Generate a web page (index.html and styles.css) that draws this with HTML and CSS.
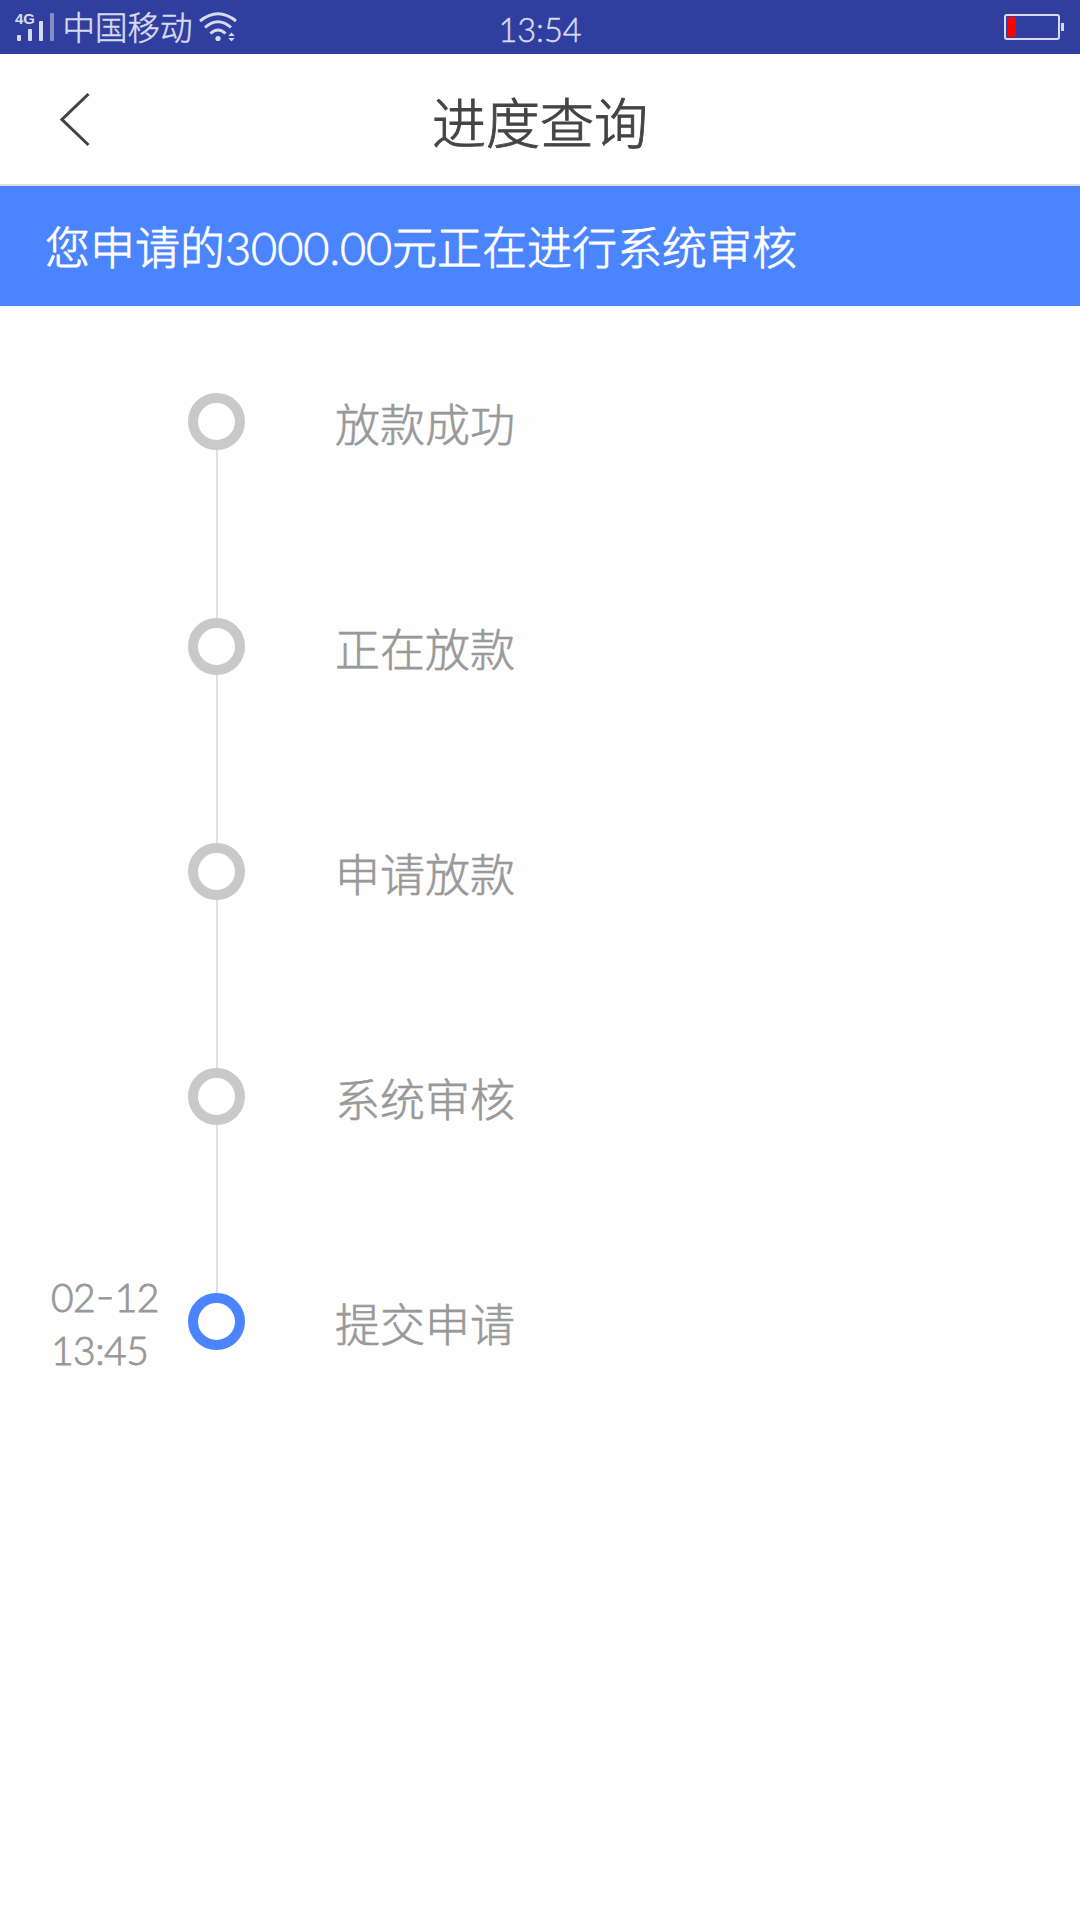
FILE: index.html
```
<!DOCTYPE html>
<html lang="zh-CN">
<head>
    <meta charset="UTF-8">
    <meta name="viewport" content="width=device-width, initial-scale=1.0">
    <title>进度查询</title>
    <link rel="stylesheet" href="styles.css">
</head>
<body>
    <div class="status-bar">
        <div class="status-left">
            <div class="signal">
                <span class="network">4G</span>
                <svg width="38" height="29" viewBox="0 0 38 29" fill="#d8dbf0">
                    <rect x="1" y="22" width="4" height="6" rx="1"/>
                    <rect x="12" y="16" width="4" height="12" rx="1"/>
                    <rect x="23" y="8" width="4" height="20" rx="1"/>
                    <rect x="34" y="0" width="4" height="28" rx="1" opacity="0.5"/>
                </svg>
            </div>
            <span class="carrier">中国移动</span>
            <svg class="wifi" width="38" height="30" viewBox="0 0 38 30" fill="none" stroke="#d8dbf0" stroke-width="3">
                <path d="M1 9 Q19 -5.500 37 9"/>
                <path d="M6 15.500 Q19 4 32 15.500"/>
                <path d="M11.500 21.500 Q19 14.500 26.500 21.500"/>
                <circle cx="19" cy="26.500" r="2.600" fill="#d8dbf0" stroke="none"/>
                <path d="M29.300 24 L32.500 20.500 L35.700 24 Z M29.300 26 L32.500 29.500 L35.700 26 Z" fill="#d8dbf0" stroke="none"/>
            </svg>
        </div>
        <div class="clock">13:54</div>
        <div class="status-right">
            <svg width="61" height="26" viewBox="0 0 61 26">
                <rect x="1" y="1" width="54" height="24" rx="2" fill="none" stroke="#d8dbf0" stroke-width="2"/>
                <rect x="3" y="3" width="9" height="20" fill="#ff0000"/>
                <rect x="57" y="9" width="3" height="8" fill="#d8dbf0"/>
            </svg>
        </div>
    </div>

    <div class="header">
        <svg class="back" width="30" height="54" viewBox="0 0 30 54" fill="none" stroke="#444" stroke-width="3">
            <path d="M28.500 1 L2 26.500 L28.500 52"/>
        </svg>
        <h1>进度查询</h1>
    </div>

    <div class="banner">您申请的3000.00元正在进行系统审核</div>

    <div class="steps">
        <div class="step">
            <div class="time"></div>
            <div class="dot"></div>
            <div class="label">放款成功</div>
        </div>
        <div class="step">
            <div class="time"></div>
            <div class="dot"></div>
            <div class="label">正在放款</div>
        </div>
        <div class="step">
            <div class="time"></div>
            <div class="dot"></div>
            <div class="label">申请放款</div>
        </div>
        <div class="step">
            <div class="time"></div>
            <div class="dot"></div>
            <div class="label">系统审核</div>
        </div>
        <div class="step active">
            <div class="time">02<span class="dash">-</span>12<br>13:45</div>
            <div class="dot"></div>
            <div class="label">提交申请</div>
        </div>
    </div>
</body>
</html>
```
FILE: styles.css
```
body {
    margin: 0;
    min-height: 1920px;
    background-color: #fefefe;
    font-family: Lato, "Noto Sans CJK SC", sans-serif;
    font-weight: 300;
    -webkit-text-stroke: 0.6px;
}

.status-bar {
    display: grid;
    grid-template-columns: 1fr auto 1fr;
    height: 54px;
    background-color: #303e9f;
    color: #d8dbf0;
    font-size: 32.5px;
    line-height: 55px;
    -webkit-text-stroke: 0.5px;
}

.status-left {
    display: flex;
    padding-left: 15px;
}

.signal {
    position: relative;
    width: 38px;
    height: 29px;
    margin: 13px 0 0 1px;
}

.signal svg {
    display: block;
}

.network {
    position: absolute;
    top: -1px;
    left: -1px;
    font-family: "Liberation Sans", sans-serif;
    font-size: 15px;
    font-weight: bold;
    line-height: 14px;
    -webkit-text-stroke: 0;
}

.carrier {
    margin-left: 8.5px;
}

.wifi {
    margin: 12px 0 0 6px;
}

.clock {
    line-height: 59px;
}

.status-right {
    display: flex;
    justify-content: flex-end;
    padding: 14px 15px 0 0;
}

.header {
    display: grid;
    grid-template-columns: 1fr auto 1fr;
    height: 130px;
    background-color: #fff;
    border-bottom: 2px solid #e0e0e0;
}

.back {
    margin: 39px 0 0 60px;
}

h1 {
    margin: 0;
    color: #444;
    font-size: 54px;
    font-weight: 300;
    line-height: 139px;
    -webkit-text-stroke: 0.9px;
}

.banner {
    height: 120px;
    padding-left: 45px;
    background-color: #4b84ff;
    color: #fff;
    font-size: 45px;
    line-height: 124px;
    -webkit-text-stroke: 0.8px;
}

.steps {
    padding-top: 87px;
}

.step {
    display: flex;
    height: 225px;
    color: #999;
}

.time {
    box-sizing: border-box;
    width: 188px;
    margin-top: -22px;
    padding-left: 51px;
    font-size: 39px;
    line-height: 53px;
    letter-spacing: -0.5px;
    -webkit-text-stroke: 0.9px;
}

.dash {
    display: inline-block;
    margin: 0 2.5px;
    letter-spacing: 0;
    transform: translateY(-2px) scaleX(1.3);
}

.dot {
    position: relative;
    box-sizing: border-box;
    width: 57px;
    height: 57px;
    border: 10.5px solid #c9c9c9;
    border-radius: 50%;
}

/* line down to the next step */
.step:not(:last-child) .dot::after {
    content: "";
    position: absolute;
    top: 47px;
    left: 18px;
    width: 2px;
    height: 168px;
    background-color: #e0e0e0;
}

.active .dot {
    border-color: #4b84ff;
}

.label {
    margin-left: 90px;
    font-size: 45px;
    line-height: 64px;
}
```
